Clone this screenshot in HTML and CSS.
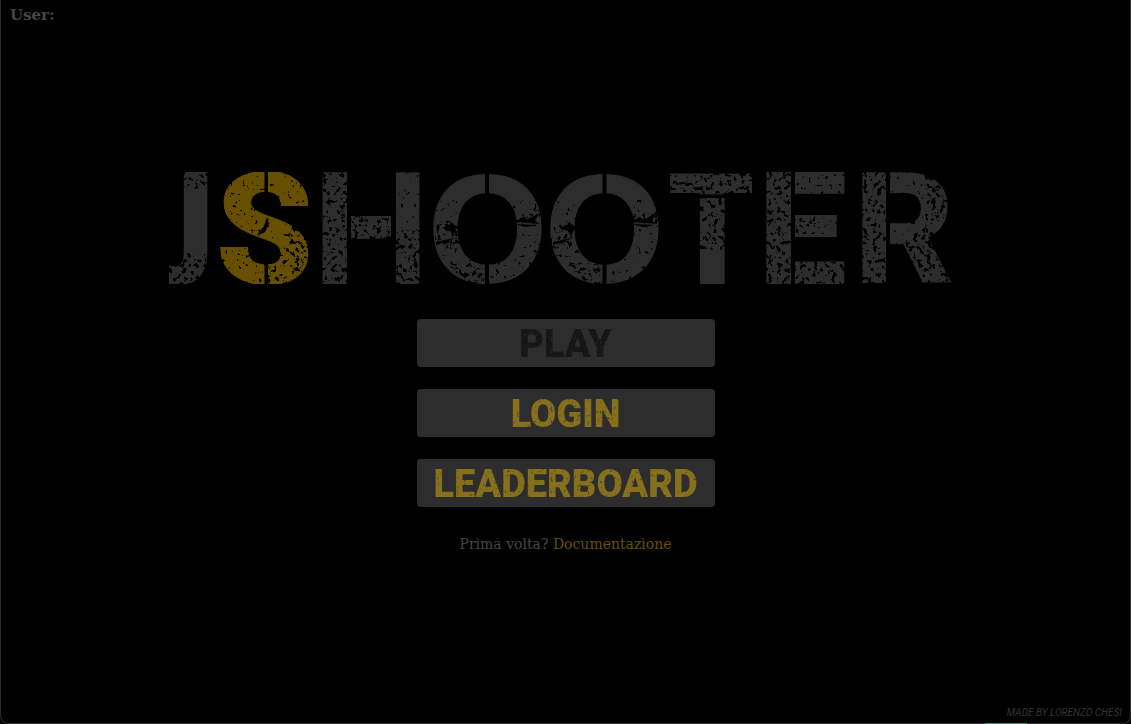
FILE: index.html
```html
<!DOCTYPE html>
<html lang="it">
<head>
<meta charset="utf-8">
<meta name="viewport" content="width=device-width, initial-scale=1">
<title>JShooter</title>
<link rel="stylesheet" href="styles.css">
</head>
<body>
<div class="screen">
  <header class="user">User:</header>
  <main class="menu">
    <h1 class="title">
      <svg class="logo" viewBox="166 168 800 120" aria-label="JSHOOTER">
        <defs>
          <filter id="grit" x="0" y="0" width="100%" height="100%">
            <feTurbulence type="fractalNoise" baseFrequency="0.22" numOctaves="3" seed="8"/>
            <feColorMatrix values="0 0 0 0 0  0 0 0 0 0  0 0 0 0 0  14 0 0 0 -8"/>
            <feComposite in2="SourceGraphic" operator="in"/>
          </filter>
          <filter id="dust" x="0" y="0" width="100%" height="100%">
            <feTurbulence type="fractalNoise" baseFrequency="0.24" numOctaves="2" seed="3"/>
            <feColorMatrix values="0 0 0 0 0  0 0 0 0 0  0 0 0 0 0  16 0 0 0 -11"/>
            <feComposite in2="SourceGraphic" operator="in"/>
          </filter>
          <filter id="scuff" x="0" y="0" width="100%" height="100%">
            <feTurbulence type="fractalNoise" baseFrequency="0.3" numOctaves="3" seed="5"/>
            <feColorMatrix values="0 0 0 0 0  0 0 0 0 0  0 0 0 0 0  4 0 0 0 -2.600" result="n"/>
            <feComposite in="SourceGraphic" in2="n" operator="out"/>
          </filter>
          <mask id="worn" maskUnits="userSpaceOnUse" x="150" y="100" width="830" height="240">
            <rect x="169" y="172" width="782" height="112" fill="#fff"/>
            <g filter="url(#dust)"><path d="M220 172H320V284H220zM396 172H421V284H396zM435 200H660V284H435zM795 172H850V234H795zM890 172H955V284H890z"/></g>
            <g filter="url(#grit)"><path d="M180 170H208V189H180zM168 250H206V284H168zM322 170H392V284H322zM396 230H422V284H396zM292 226H312V250L300 284H268V265L284 258zM448 262L486 264V284H470zM506 214L540 210V224H506zM436 224H456L462 248L440 250zM565 262L604 264V284H588zM624 214L658 210V224H624zM553 224H574L580 248L558 250zM668 170H754V195H668zM696 196H726V250H696zM764 170H792V284H764zM795 262H850V284H795zM795 214H815V234H795zM861 172H887V284H861zM925 172L951 180V215L930 225L951 284H915L905 240L925 225z"/></g>
            <path d="M264.500 168h3.500v24h-3.500zM264.500 262h3.500v24h-3.500zM347 168h4v120h-4zM391 168h5v120h-5zM485 168h4v26h-4zM485 261h4v26h-4zM602.500 168h4v26h-4zM602.500 261h4v26h-4zM668 194.500h86v3.500h-86zM660 168h10v120h-10zM752 168h11v120h-11zM791 168h4v120h-4zM886 168h4v120h-4z"/>
            <path d="M442 228l9-4-3-4 8 6 10 1-10 2-3 8-3-6zM436 242l22-5-14 6-8 2zM514 222l9-5 3 3 13-7-4 8 5 3-10-1zM514 224l24 1-12 2zM560 228l9-4-3-4 8 6 10 1-10 2-3 8-3-6zM553 242l22-5-14 6-8 2zM631 222l9-5 3 3 13-7-4 8 5 3-10-1zM631 224l24 1-12 2zM267 217l-3 9-5 6-2 4 8-4 4-8zM923 172l3 8 9-5z"/>
          </mask>
        </defs>
        <g class="logo-text" mask="url(#worn)">
          <text class="logo-j" x="175" y="258">J</text>
          <text class="logo-s" x="216" y="283">S</text>
          <text class="logo-h" x="314" y="283">H</text>
          <text class="logo-round" x="428" y="282">O</text>
          <text class="logo-round" x="545" y="282">O</text>
          <text class="logo-t" x="664" y="283">T</text>
          <text class="logo-e" x="759" y="283">E</text>
          <text x="854" y="283">R</text>
        </g>
      </svg>
    </h1>
    <nav class="actions">
      <button class="action" type="button" disabled><span class="label">PLAY</span></button>
      <button class="action" type="button"><span class="label">LOGIN</span></button>
      <button class="action" type="button"><span class="label">LEADERBOARD</span></button>
    </nav>
    <p class="help">Prima volta? <a class="docs" href="#">Documentazione</a></p>
  </main>
  <footer class="credit">MADE BY LORENZO CHESI</footer>
  <span class="accent"></span>
</div>
</body>
</html>
```
FILE: styles.css
```css
* { box-sizing: border-box; }
body { margin: 0; background: #000; }
.screen {
  position: relative;
  display: grid;
  grid-template-rows: 1fr;
  min-height: 100vh;
  border: 1px solid #2d2d2d;
  border-top: 0;
  border-radius: 0 0 8px 8px;
  background: #000;
}
.user {
  position: absolute;
  top: 6px;
  left: 9px;
  font: bold 15px/18px "DejaVu Serif", serif;
  color: #464646;
}
.menu {
  display: flex;
  flex-direction: column;
  align-items: center;
  justify-content: center;
}
.title {
  width: 800px;
  max-width: 100%;
  margin: 0 0 31px;
}
.logo { display: block; width: 100%; overflow: visible; }
.logo-text {
  font: 900 155px Roboto, sans-serif;
  fill: #2d2d2d;
  stroke: #2d2d2d;
  stroke-width: 0;
}
.logo-j { font: 800 120px "Noto Sans", sans-serif; stroke-width: 3px; }
.logo-s { fill: #665000; stroke: #665000; stroke-width: 1px; }
.logo-h { font-family: "Liberation Sans", sans-serif; font-size: 158px; stroke-width: 4px; }
.logo-round { font-family: "Liberation Sans", sans-serif; font-size: 153px; stroke-width: 2px; }
.logo-t { font-family: "Liberation Sans", sans-serif; font-size: 158px; stroke-width: 2px; }
.logo-e { stroke-width: 2px; }
.actions {
  display: flex;
  flex-direction: column;
  gap: 22px;
  width: 298px;
}
.action {
  height: 48px;
  padding: 2px 0 0;
  border: 0;
  border-radius: 4px;
  background: #2d2d2d;
  color: #86701d;
  font: 900 38px/46px Roboto, sans-serif;
  cursor: pointer;
}
.action:disabled { color: #171717; cursor: default; }
.label { display: block; filter: url(#scuff); }
.help {
  margin: 26px 0 0;
  font: 14px/22px "DejaVu Serif", serif;
  color: #464646;
}
.docs { color: #665000; text-decoration: none; }
.credit {
  position: absolute;
  right: 8px;
  bottom: 4px;
  font: italic 10px/12px Roboto, sans-serif;
  color: #343434;
}
.accent {
  position: absolute;
  right: 103px;
  bottom: -1px;
  width: 42px;
  height: 1px;
  background: linear-gradient(90deg, #3a8aa2, #4a8a5a);
}
```
